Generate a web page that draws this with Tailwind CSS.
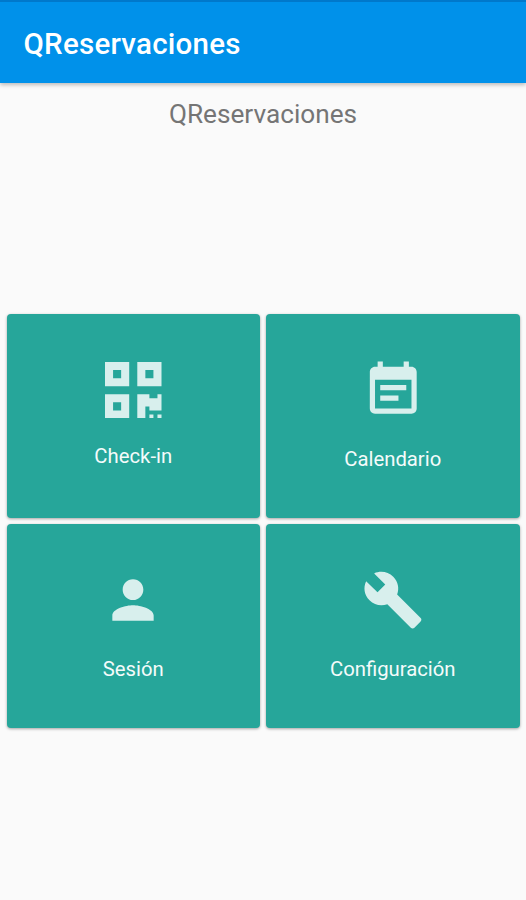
<!DOCTYPE html>
<html lang="es">
<head>
<meta charset="utf-8">
<title>QReservaciones</title>
<script src="https://cdn.jsdelivr.net/npm/@tailwindcss/browser@4"></script>
</head>
<body class="h-[900px] overflow-hidden bg-[#fafafa] font-[Roboto,sans-serif]">
<header class="flex h-[83px] items-center border-t-2 border-[#0078cb] bg-[#0091ea] pl-[23.5px] pt-[2px] shadow-[0_2px_4px_rgba(0,0,0,0.25)]">
  <h1 class="text-[29.5px] leading-[36px] font-medium tracking-[0.25px] text-white whitespace-nowrap">QReservaciones</h1>
</header>
<main>
  <h2 class="h-[230.5px] pt-[14px] text-center text-[26.2px] leading-[34px] text-[#757575]">QReservaciones</h2>
  <div class="grid grid-cols-2 gap-x-[6px] gap-y-[6.5px] px-[6.5px]">
    <button class="flex h-[204px] flex-col items-center rounded-[4px] bg-[#26a69a] pt-12 shadow-[0_1px_3px_rgba(0,0,0,0.35)]">
      <svg class="h-[56.5px] w-[56.5px] fill-[#d8efed]" viewBox="0 32 448 448"><path d="M0 224h192V32H0v192zM64 96h64v64H64V96zm192-64v192h192V32H256zm128 128h-64V96h64v64zM0 480h192V288H0v192zm64-128h64v64H64v-64zm352-64h32v128h-96v-32h-32v96h-64V288h96v32h64v-32zm0 160h32v32h-32v-32zm-64 0h32v32h-32v-32z"/></svg>
      <span class="mt-[25.5px] text-[20.3px] leading-6 text-[#f4fbfa]">Check-in</span>
    </button>
    <button class="flex h-[204px] flex-col items-center rounded-[4px] bg-[#26a69a] pt-[45px] shadow-[0_1px_3px_rgba(0,0,0,0.35)]">
      <svg class="h-[62.5px] w-[62.5px] fill-[#d8efed]" viewBox="0 0 24 24"><path d="M14 14H7v2h7v-2zm5-11h-1V1h-2v2H8V1H6v2H5c-1.11 0-1.99.9-1.99 2L3 19c0 1.1.89 2 2 2h14c1.1 0 2-.9 2-2V5c0-1.1-.9-2-2-2zm0 16H5V8h14v11zm-2-9H7v2h10v-2z"/></svg>
      <span class="mt-[26px] text-[20.3px] leading-6 text-[#f4fbfa]">Calendario</span>
    </button>
    <button class="flex h-[204px] flex-col items-center rounded-[4px] bg-[#26a69a] pt-[45px] shadow-[0_1px_3px_rgba(0,0,0,0.35)]">
      <svg class="h-[62px] w-[62px] fill-[#d8efed]" viewBox="0 0 24 24"><path d="M12 12c2.21 0 4-1.79 4-4s-1.79-4-4-4-4 1.79-4 4 1.79 4 4 4zm0 2c-2.67 0-8 1.34-8 4v2h16v-2c0-2.66-5.33-4-8-4z"/></svg>
      <span class="mt-[26px] text-[20.3px] leading-6 text-[#f4fbfa]">Sesión</span>
    </button>
    <button class="flex h-[204px] flex-col items-center rounded-[4px] bg-[#26a69a] pt-[45px] shadow-[0_1px_3px_rgba(0,0,0,0.35)]">
      <svg class="h-[62px] w-[62px] fill-[#d8efed]" viewBox="0 0 24 24"><path d="M22.7 19l-9.1-9.1c.9-2.3.4-5-1.5-6.9-2-2-5-2.4-7.4-1.3L9 6 6 9 1.6 4.7C.4 7.1.9 10.1 2.9 12.1c1.9 1.9 4.6 2.4 6.9 1.5l9.1 9.1c.4.4 1 .4 1.4 0l2.3-2.3c.5-.4.5-1.1.1-1.4z"/></svg>
      <span class="mt-[26px] text-[20.3px] leading-6 text-[#f4fbfa]">Configuración</span>
    </button>
  </div>
</main>
</body>
</html>
